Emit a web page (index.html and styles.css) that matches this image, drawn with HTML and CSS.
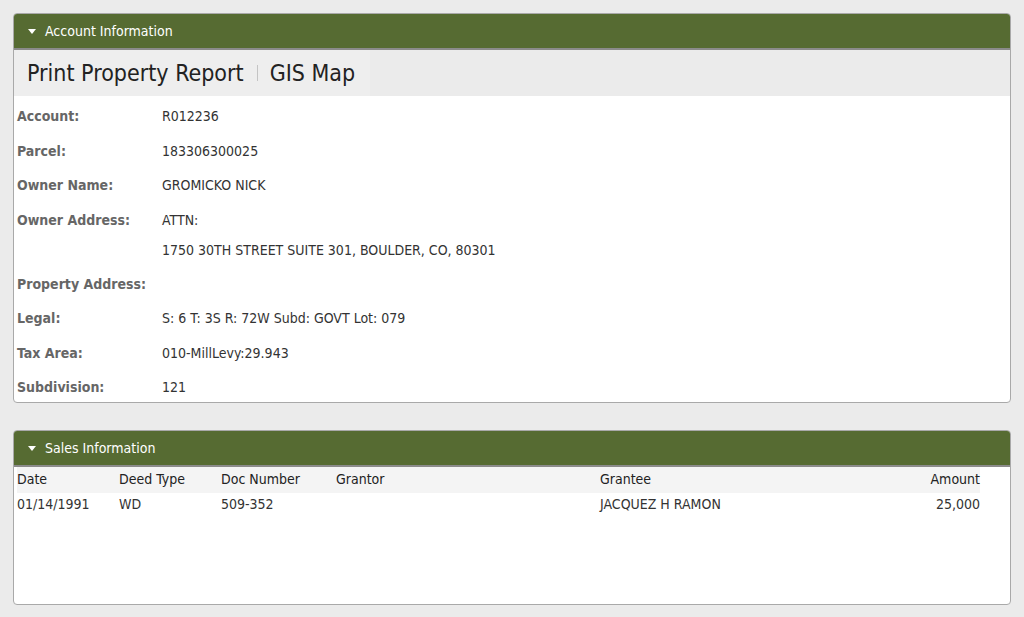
FILE: index.html
```html
<!DOCTYPE html>
<html>
<head>
<meta charset="utf-8">
<link rel="stylesheet" href="styles.css">
</head>
<body>
<div class="page">
  <section class="panel">
    <div class="panel-head"><span class="caret"></span>Account Information</div>
    <div class="toolbar">
      <div class="links"><span>Print Property Report</span><span class="sep"></span><span>GIS Map</span></div>
    </div>
    <div class="details">
      <div class="row"><div class="label">Account:</div><div class="value">R012236</div></div>
      <div class="row"><div class="label">Parcel:</div><div class="value">183306300025</div></div>
      <div class="row"><div class="label">Owner Name:</div><div class="value">GROMICKO NICK</div></div>
      <div class="row"><div class="label">Owner Address:</div><div class="value">ATTN:<div class="line2">1750 30TH STREET SUITE 301, BOULDER, CO, 80301</div></div></div>
      <div class="row"><div class="label">Property Address:</div><div class="value"></div></div>
      <div class="row"><div class="label">Legal:</div><div class="value">S: 6 T: 3S R: 72W Subd: GOVT Lot: 079</div></div>
      <div class="row"><div class="label">Tax Area:</div><div class="value">010-MillLevy:29.943</div></div>
      <div class="row"><div class="label">Subdivision:</div><div class="value">121</div></div>
    </div>
  </section>
  <section class="panel sales">
    <div class="panel-head"><span class="caret"></span>Sales Information</div>
    <table class="grid">
      <thead>
        <tr><th class="c-date">Date</th><th class="c-deed">Deed Type</th><th class="c-doc">Doc Number</th><th class="c-grantor">Grantor</th><th class="c-grantee">Grantee</th><th class="c-amt">Amount</th></tr>
      </thead>
      <tbody>
        <tr><td>01/14/1991</td><td>WD</td><td>509-352</td><td></td><td>JACQUEZ H RAMON</td><td class="c-amt">25,000</td></tr>
      </tbody>
    </table>
  </section>
</div>
</body>
</html>
```
FILE: styles.css
```css
html, body { margin: 0; padding: 0; }
body {
  background: #ebebeb;
  font-family: "DejaVu Sans Condensed", "DejaVu Sans", sans-serif;
  font-size: 14px;
  color: #333;
}
.page {
  padding: 13px 13px 0 13px;
  width: 998px;
}
.panel {
  background: #fff;
  border: 1px solid #a9a9a9;
  border-radius: 4px;
  overflow: hidden;
  margin-bottom: 27px;
}
.panel-head {
  background: #566b32;
  color: #fff;
  height: 34px;
  line-height: 34px;
  border-bottom: 2px solid #8b8b8b;
  padding-left: 31px;
  display: flex;
  align-items: center;
  font-size: 14px;
}
.caret {
  width: 0; height: 0;
  border-left: 4.5px solid transparent;
  border-right: 4.5px solid transparent;
  border-top: 5px solid #fff;
  margin-left: -17px;
  margin-right: 9px;
}
.toolbar {
  background: #ebebeb;
  height: 46px;
  display: flex;
}
.links {
  background: #eeeeee;
  width: 343px;
  padding-left: 13px;
  display: flex;
  align-items: center;
  font-size: 23px;
  color: #222;
}
.sep {
  width: 1px;
  height: 16px;
  background: #c4c4c4;
  margin: 0 12px 0 13px;
}
.details {
  padding: 12px 0 0 3px;
}
.row {
  display: flex;
  min-height: 34.5px;
}
.row:last-child { min-height: 23px; }
.label {
  width: 145px;
  font-weight: bold;
  color: #666;
  line-height: 17px;
}
.value {
  line-height: 17px;
  color: #333;
}
.line2 { margin-top: 13px; padding-bottom: 17px; }
.sales { height: 173px; }
.grid {
  border-collapse: collapse;
  width: 963px;
  margin-left: 3px;
}
.grid th {
  background: #f4f4f4;
  font-weight: normal;
  text-align: left;
  color: #222;
  height: 26px;
  padding: 0 0 3px 0;
  box-sizing: border-box;
}
.grid td {
  padding: 3px 0 0 0;
  height: 25px;
  line-height: 17px;
  vertical-align: top;
  color: #333;
}
.c-date { width: 102px; }
.c-deed { width: 102px; }
.c-doc { width: 115px; }
.c-grantor { width: 264px; }
.grid .c-amt { text-align: right; }
```
